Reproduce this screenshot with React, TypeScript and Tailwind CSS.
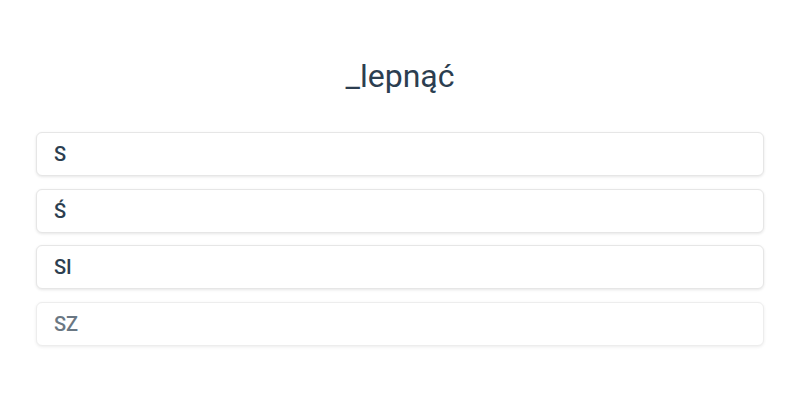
const options = ['s', 'ś', 'si', 'sz'];

export default function App() {
  return (
    <div className="min-h-screen bg-white px-9 pt-[56px]" style={{ fontFamily: 'Roboto, "Noto Sans", sans-serif' }}>
      <h1 className="text-center text-[32px] leading-[40px] text-[#2c3e50]">_lepnąć</h1>
      <div className="mt-[36px] flex flex-col gap-[12.5px]">
        {options.map((o, i) => (
          <button
            key={o}
            className={`flex h-[44px] items-center rounded-md border border-[#e6e6e6] bg-white px-[17px] text-left text-[20px] font-medium uppercase text-[#2c3e50] shadow-[0_1px_3px_rgba(0,0,0,0.1)] ${i === 3 ? 'opacity-70' : ''}`}
          >
            {o}
          </button>
        ))}
      </div>
    </div>
  );
}
